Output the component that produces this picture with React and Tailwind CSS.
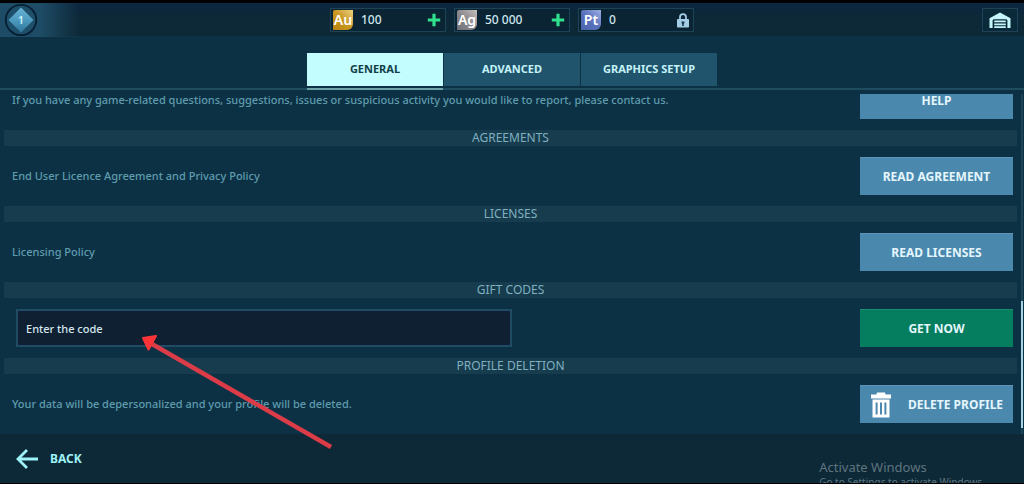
import React, { useState } from "react";

const currencies = [
  { symbol: "Au", amount: "100", tile: "from-[#b98412] via-[#c9971f] to-[#ecd27a]" },
  { symbol: "Ag", amount: "50 000", tile: "from-[#6f7078] via-[#8d8b90] to-[#c4bfbc]" },
  { symbol: "Pt", amount: "0", tile: "from-[#4a63ad] via-[#5a72bd] to-[#9fb0e4]", locked: true },
];

const tabs = ["GENERAL", "ADVANCED", "GRAPHICS SETUP"];

const PlusIcon = () => (
  <svg width="14" height="14" viewBox="0 0 14 14" aria-hidden="true">
    <path d="M7 0.8V13.2M0.8 7H13.2" stroke="#2fe08c" strokeWidth="3.2" />
  </svg>
);

const LockIcon = () => (
  <svg width="12" height="15" viewBox="0 0 12 15" aria-hidden="true">
    <path d="M3 7V4.2a3 3 0 0 1 6 0V7" fill="none" stroke="#a3cde4" strokeWidth="1.8" />
    <rect x="0" y="6" width="12" height="8.6" rx="0.8" fill="#a3cde4" />
    <path d="M4.6 8.6h2.8v1.6l-.6.6v2.2H5.2v-2.2l-.6-.6z" fill="#12344a" />
  </svg>
);

const HangarIcon = () => (
  <svg width="22" height="17" viewBox="0 0 22 17" aria-hidden="true">
    <path d="M11 0.5L21.5 6.2V16H18.4V8.2L17.4 7.2H4.6L3.6 8.2V16H0.5V6.2z" fill="#c4f6fb" />
    <path d="M5.2 9.4H16.8M5.2 12.3H16.8M5.2 15.2H16.8" stroke="#c4f6fb" strokeWidth="1.7" />
  </svg>
);

const TrashIcon = () => (
  <svg width="22" height="26" viewBox="0 0 22 26" aria-hidden="true">
    <path d="M7 0.5h8l.6 2H21v4H1v-4h5.4z" fill="#fff" />
    <path d="M2.5 7.5h17V25.5h-17z" fill="#fff" />
    <path d="M6.6 10.5v12M11 10.5v12M15.4 10.5v12" stroke="#4a88ae" strokeWidth="2" />
  </svg>
);

const BackIcon = () => (
  <svg width="22" height="20" viewBox="0 0 22 20" aria-hidden="true">
    <path d="M11 1L2 10L11 19M2 10H22" fill="none" stroke="#9df3f8" strokeWidth="2.8" />
  </svg>
);

const RankBadge = () => (
  <svg width="34" height="34" viewBox="0 0 34 34" role="img" aria-label="Rank 1">
    <defs>
      <linearGradient id="rank" x1="0" y1="0" x2="0" y2="1">
        <stop offset="0" stopColor="#68b4d6" />
        <stop offset="0.55" stopColor="#4a98bd" />
        <stop offset="1" stopColor="#2f7397" />
      </linearGradient>
    </defs>
    <circle cx="17" cy="17" r="15.2" fill="#1e506c" stroke="#071f33" strokeWidth="1.8" />
    <path d="M17 4.5L29.5 17L17 29.5L4.5 17z" fill="url(#rank)" />
    <text x="17" y="21" textAnchor="middle" fontSize="11" fontWeight="600" fill="#c9f4fb">1</text>
  </svg>
);

const Section = ({ title, children }) => (
  <section className="shrink-0">
    <h2 className="mx-1 flex h-4 items-center justify-center bg-[#163c4e] text-xs text-[#80b0c0]">
      {title}
    </h2>
    <Row>{children}</Row>
  </section>
);

const Row = ({ children }) => (
  <div className="flex h-15 shrink-0 items-center justify-between gap-4 pr-2 pl-3 text-[11px] leading-3 font-medium text-[#5f9cae]">
    {children}
  </div>
);

const ActionButton = ({ children, className = "bg-[#4a88ae]" }) => (
  <button
    type="button"
    className={`flex h-[38px] w-[153px] shrink-0 items-center justify-center border-t border-white/10 text-xs leading-3 font-bold text-[#e4f6fc] ${className}`}
  >
    {children}
  </button>
);

export default function App() {
  const [activeTab, setActiveTab] = useState("GENERAL");
  const [code, setCode] = useState("");

  return (
    <div className="relative flex h-screen flex-col overflow-hidden border-t-[3px] border-b border-black bg-[#0c3144] font-['Noto_Sans',sans-serif]">

      {/* Top bar */}
      <header className="grid h-[33px] shrink-0 grid-cols-[1fr_auto_1fr] items-center bg-linear-to-b from-[#0b2640] to-[#0d2836] to-50%">
        <div className="flex h-full w-20 items-center bg-linear-to-r from-[#1e4c66] from-50% to-transparent pl-1">
          <RankBadge />
        </div>

        <div className="flex gap-2">
          {currencies.map((item) => (
            <div
              key={item.symbol}
              className="flex h-6 w-29 items-center border border-[#1c4356] bg-[#0a2434] pr-1 pl-0.5"
            >
              <span
                className={`flex h-5 w-5 items-center justify-center rounded-tl-xs rounded-br-md bg-linear-to-tr text-sm font-semibold text-white ${item.tile}`}
              >
                {item.symbol}
              </span>
              <span className="ml-2 flex-1 text-xs font-medium text-[#cfe6ee]">{item.amount}</span>
              {item.locked ? (
                <LockIcon />
              ) : (
                <button type="button" aria-label={`Add ${item.symbol}`}>
                  <PlusIcon />
                </button>
              )}
            </div>
          ))}
        </div>

        <button
          type="button"
          aria-label="Hangar"
          className="mr-1.5 flex h-6 w-9 items-center justify-center justify-self-end border border-[#1f4356] bg-[#0b2a39]"
        >
          <HangarIcon />
        </button>
      </header>

      {/* Tabs */}
      <nav className="flex shrink-0 justify-center gap-px border-b-2 border-[#1f4d60] pt-[17px]">
        {tabs.map((tab) => (
          <button
            key={tab}
            type="button"
            onClick={() => setActiveTab(tab)}
            className={`-mb-0.5 w-34 border-b-2 text-[11px] font-bold ${
              activeTab === tab ? "border-[#6fa5a8] text-[#124046]" : "border-transparent text-[#c5f3f8]"
            }`}
          >
            <span
              className={`mb-0.5 flex h-[33px] items-center justify-center ${
                activeTab === tab ? "bg-[#c3fdfe]" : "bg-[#20536c]"
              }`}
            >
              {tab}
            </span>
          </button>
        ))}
      </nav>

      {/* Settings list */}
      <div className="mt-1 flex min-h-0 flex-1">
        <main className="flex min-w-0 flex-1 flex-col justify-end overflow-hidden">
          <Row>
            <p>
              If you have any game-related questions, suggestions, issues or suspicious activity you would like to report, please contact us.
            </p>
            <ActionButton>HELP</ActionButton>
          </Row>
          <Section title="AGREEMENTS">
            <p>End User Licence Agreement and Privacy Policy</p>
            <ActionButton>READ AGREEMENT</ActionButton>
          </Section>
          <Section title="LICENSES">
            <p>Licensing Policy</p>
            <ActionButton>READ LICENSES</ActionButton>
          </Section>
          <Section title="GIFT CODES">
            <input
              type="text"
              aria-label="Gift code"
              placeholder="Enter the code"
              value={code}
              onChange={(e) => setCode(e.target.value)}
              className="ml-1 h-[38px] w-1/2 max-w-[496px] border-2 border-[#214a64] bg-[#0e2031] px-2 text-[11px] text-[#d5e6ee] outline-none placeholder:text-[#d5e6ee]"
            />
            <ActionButton className="bg-[#047e5f]">GET NOW</ActionButton>
          </Section>
          <Section title="PROFILE DELETION">
            <p>Your data will be depersonalized and your profile will be deleted.</p>
            <ActionButton className="gap-4 bg-[#4a88ae]">
              <TrashIcon />
              DELETE PROFILE
            </ActionButton>
          </Section>
        </main>

        {/* Scrollbar */}
        <div className="mr-px flex w-0.5 flex-col justify-end bg-[#1c4558] pb-1.5">
          <div className="h-[38%] bg-[#a5d4e6]" />
        </div>
      </div>

      {/* Bottom bar */}
      <footer className="flex h-[49px] shrink-0 items-center bg-[#0d2836] pl-4">
        <button type="button" className="flex items-center gap-3 text-xs font-bold text-[#9df3f8]">
          <BackIcon />
          BACK
        </button>
      </footer>

      {/* Windows activation notice */}
      <div className="pointer-events-none absolute -bottom-1.5 left-[80%] text-[#5e7580]">
        <p className="text-[13px] leading-4">Activate Windows</p>
        <p className="text-[10px] leading-3.5">Go to Settings to activate Windows.</p>
      </div>

      {/* Pointer to the code field */}
      <svg
        className="pointer-events-none absolute top-[330px] left-[140px]"
        width="194"
        height="118"
        viewBox="0 0 194 118"
        aria-hidden="true"
      >
        <path d="M12 11L191 114" stroke="#dc3c48" strokeWidth="4.4" />
        <path d="M3 5L16 3L8.5 16.5z" fill="#fb3438" stroke="#fb3438" strokeWidth="2" strokeLinejoin="round" />
      </svg>
    </div>
  );
}
